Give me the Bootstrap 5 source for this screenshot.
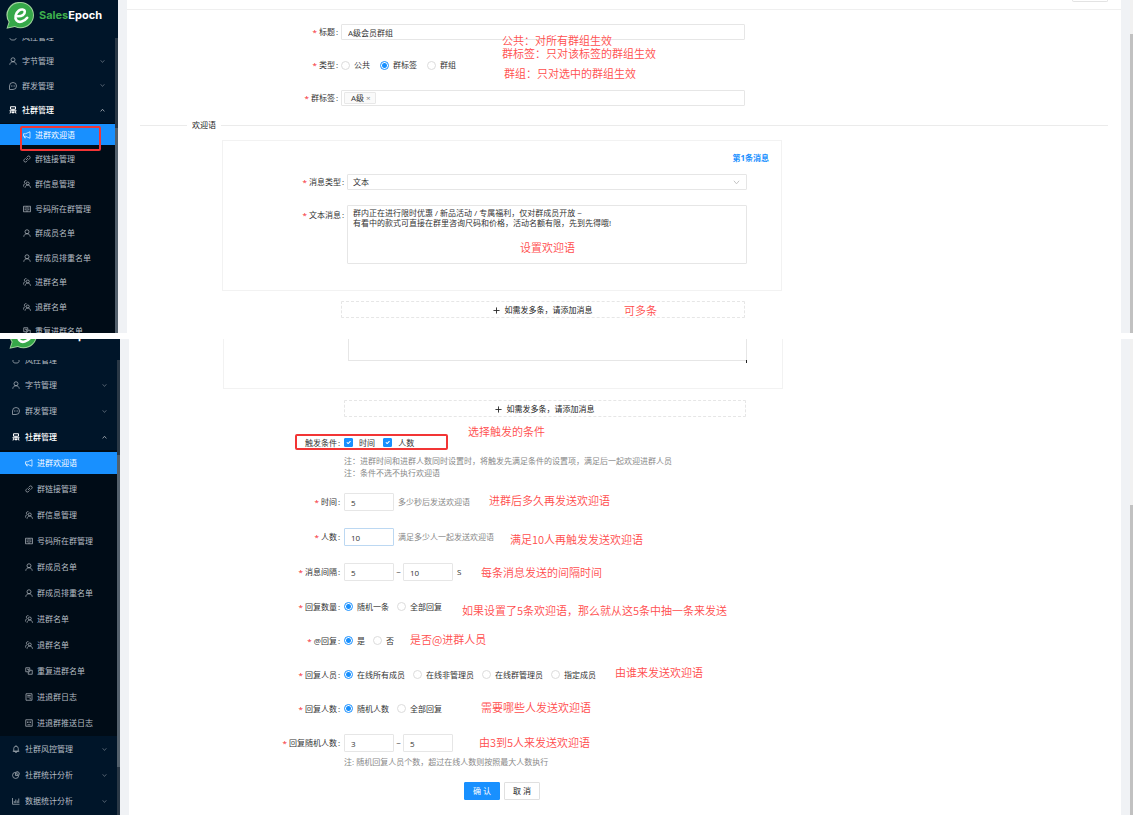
<!DOCTYPE html>
<html lang="zh-CN">
<head>
<meta charset="utf-8">
<meta name="viewport" content="width=device-width, initial-scale=1">
<title>SalesEpoch 进群欢迎语</title>
<link href="https://cdn.jsdelivr.net/npm/bootstrap@5.3.0/dist/css/bootstrap.min.css" rel="stylesheet">
<style>
  body { font-family: "Open Sans", "Noto Sans CJK SC", sans-serif; font-size: 8px; line-height: 16px; color: #333; background: #fff; }
  a { text-decoration: none; }
  .ico { width: 8px; height: 8px; fill: none; stroke: currentColor; stroke-width: 1.4; flex: none; }
  .second { margin-top: 6px; }

  /* sidebar */
  .side { width: 118px; background: #001529; flex: none; }
  .side-b { width: 120px; }
  .brand { height: 38px; padding: 0 0 9px 6px; gap: 5px; overflow: hidden; }
  .side-b .brand { height: 21px; padding: 0 0 11px 9px; }
  .brand svg { width: 28px; height: 27px; flex: none; }
  .brand-text { font: 700 11px/14px Inter, sans-serif; color: #fff; margin-bottom: 7px; }
  .brand-text span { color: #3daf4c; }
  .menu { min-height: 0; }
  .menu li { flex: 1 1 0; display: flex; align-items: center; overflow: hidden; color: #b6bdc4; min-height: 0; }
  .side-b .menu li { flex: 0 0 26px; }
  .menu a { color: inherit; display: flex; align-items: center; flex: 1; height: 21px; padding: 0 10px 0 9px; gap: 5px; white-space: nowrap; }
  .side-b .menu a { height: 22px; padding-left: 12px; }
  .menu a .arrow { margin-left: auto; width: 5px; height: 5px; opacity: .7; }
  .menu li.sub { background: #000c17; }
  .menu li.sub a { padding-left: 23px; gap: 4px; }
  .side-b .menu li.sub a { padding-left: 25px; }
  .menu li.open, .menu li.on { color: #fff; }
  .menu li.open { font-weight: 500; }
  .menu li.on a { background: #1890ff; }
  .menu li.cut-top { flex: 0 0 11px; align-items: flex-end; }
  .side-b .menu li.cut-top { flex: 0 0 12px; }
  .menu li.cut-end { flex: 0 0 14px; align-items: flex-start; }
  .menu li.cut-top a, .menu li.cut-end a { height: 24px; flex: 1 0 auto; }
  .bar { width: 3px; background: #2a3846; }
  .bar i { display: block; height: 100%; background: #53606c; }
  .bar-a { padding-top: 90px; }
  .bar-b { padding: 95px 0 48px; }

  /* page */
  .gut { width: 9px; background: #f0f2f5; flex: none; }
  .scr { width: 3px; background: #f1f1f1; flex: none; padding-top: 34px; }
  .scr-b { padding-top: 166px; }
  .scr i { display: block; height: 100%; background: #c1c1c1; }
  .page { min-width: 0; background: #fff; }
  .page-b { padding-bottom: 15px; }
  .topbar { height: 10px; border-bottom: 1px solid #efefef; padding-right: 13px; margin-bottom: 14px; }
  .stub { width: 36px; height: 2px; border: 1px solid #e3e3e3; border-top: 0; border-radius: 0 0 2px 2px; background: #fff; padding: 0; }

  /* form rows */
  .fr { display: grid; grid-template-columns: 214px minmax(0, 404fr) 376fr; min-height: 16px; margin-bottom: 17px; align-items: center; }
  .page-b .fr { grid-template-columns: 215px minmax(0, 402fr) 375fr; min-height: 17px; }
  .page-b .fr.tall { min-height: 18px; }
  .lab { text-align: right; padding-right: 3px; white-space: nowrap; color: #333; }
  .page-b .lab { padding-right: 4px; }
  .lab::after { content: ":"; margin-left: 1px; }
  .req::before { content: "*"; color: #f5222d; margin-right: 2px; }
  .box { display: block; width: 100%; height: 16px; border: 1px solid #e6e6e6; border-radius: 1px; padding: 0 6px; font-size: 8px; line-height: 14px; color: #333; background-color: #fff; min-width: 0; }
  .box.num { width: 50px; height: 18px; line-height: 16px; flex: none; }
  .box.focus-on { border-color: #bcd8f2; }
  textarea.box { height: 59px; padding: 2px 5px; line-height: 10px; resize: none; }
  select.box { appearance: none; padding: 0 5px; }
  .opts { display: flex; gap: 8px; white-space: nowrap; }
  .opts.wide { gap: 10px; }
  .opts label { display: flex; align-items: center; gap: 4px; }
  .page .form-check-input { width: 9px; height: 9px; margin: 0; float: none; border: 1px solid #dcdcdc; background-color: #fff; }
  .page .form-check-input[type=radio]:checked { border-color: #1890ff; background-image: radial-gradient(circle, #1890ff 0 2px, #fff 3px); background-size: 100% 100%; }
  .page .form-check-input[type=checkbox] { border-radius: 1px; }
  .page .form-check-input[type=checkbox]:checked { border-color: #1890ff; background-color: #1890ff; }
  .chip { height: 12px; padding: 0 4px 0 6px; margin-left: 2px; border: 1px solid #e8e8e8; background: #fafafa; border-radius: 1px; line-height: 10px; }
  .chip button { border: 0; background: none; padding: 0 0 0 2px; color: #888; line-height: 10px; }
  .tilde { width: 9px; text-align: center; }
  .sep { margin: 11px 13px 7px; gap: 5px; color: #222; }
  .sep i { height: 1px; background: #ebebeb; }
  .sep i:first-child { width: 47px; }
  .card-line { display: grid; grid-template-columns: 95px minmax(0, 560fr) 339fr; }
  .page-b .card-line { grid-template-columns: 94px minmax(0, 560fr) 338fr; }
  .panel { border: 1px solid #f2f2f2; padding: 9px 34px 26px 0; }
  .panel .fr { grid-template-columns: 124px minmax(0, 1fr); margin-bottom: 15px; }
  .panel .fr:last-child { margin-bottom: 0; align-items: start; }
  .panel .fr:last-child .lab { padding-top: 2px; }
  .panel .first { margin: 0 -22px 8px 0; text-align: right; font-weight: 700; }
  .panel .first a { color: #1890ff; }
  .page-b .panel { border-top: 0; padding: 0 35px 27px 124px; }
  .page-b .panel textarea.box { height: 22px; border-top: 0; border-radius: 0; }
  .grip::after { content: ""; position: absolute; right: 0; bottom: -2px; width: 1px; height: 3px; background: #222; }
  .add { height: 17px; border: 1px dashed #e6e6e6; border-radius: 1px; background: #fff; padding: 0; font-size: 8px; line-height: 15px; color: #222; width: 100%; }
  .add svg { width: 7px; height: 7px; margin-right: 2px; }
  .add-a { margin: 10px 0 0; padding-bottom: 15px; }
  .add-b { margin-top: 11px; }
  .chev { position: absolute; right: 7px; top: 5px; color: #bbb; width: 7px; height: 7px; }
  .tip { color: #888; }
  .notes { padding-left: 215px; line-height: 12px; color: #888; }
  .notes + .tall { margin-top: 14px; }
  .actions { padding: 14px 0 0 335px; }
  .act { width: 36px; height: 18px; border: 1px solid #e0e0e0; border-radius: 1px; padding: 0; font-size: 8px; line-height: 16px; background: #fff; color: #222; }
  .act.ok { background: #1890ff; border-color: #1890ff; color: #fff; }

  /* red mark-up laid over the form */
  .say { position: absolute; font-size: 11px; line-height: 13px; color: #ff4d4d; white-space: nowrap; font-weight: 350; font-family: "Noto Sans CJK SC", sans-serif; }
  .ring { position: absolute; border: 2px solid #f23535; border-radius: 2px; pointer-events: none; }
  .ring-a { left: 20px; top: 126px; width: 81px; height: 25px; }
  .ring-b { left: 166px; top: 95px; width: 153px; height: 16px; }
  .a1 { left: 375px; top: 34px; } .a2 { left: 375px; top: 47px; } .a3 { left: 377px; top: 67px; }
  .a4 { left: 393px; top: 241px; } .a5 { left: 497px; top: 304px; }
  .b1 { left: 339px; top: 86px; } .b2 { left: 360px; top: 155px; } .b3 { left: 381px; top: 194px; }
  .b4 { left: 352px; top: 227px; } .b5 { left: 333px; top: 265px; } .b6 { left: 281px; top: 294px; }
  .b7 { left: 486px; top: 327px; } .b8 { left: 352px; top: 362px; } .b9 { left: 350px; top: 397px; }
</style>
</head>
<body>
<svg class="d-none" xmlns="http://www.w3.org/2000/svg">
  <symbol id="user" viewBox="0 0 16 16"><circle cx="8" cy="5.5" r="4"/><path d="M1.5 15.5c.5-4 3-6 6.500-6s6 2 6.500 6"/></symbol>
  <symbol id="users" viewBox="0 0 16 16"><circle cx="9.500" cy="7" r="3"/><path d="M4 15.500c.5-3.500 2.500-5.500 5.500-5.500s5 2 5.500 5.500M7 1.500C4 .5 2 3 3 5.500L4.500 7C2 8 1 10 1 13"/></symbol>
  <symbol id="chat" viewBox="0 0 16 16"><path d="M1 15V8a7 7 0 1 1 7 7z"/><path d="M4 8h1.500M7.300 8h1.500M10.600 8h1.500" stroke-width="1.800"/></symbol>
  <symbol id="team" viewBox="0 0 16 16"><path d="M3 1.500h10v5H3zM8 6.500V15M1 9.500h14M4 9.500L2 15M12 9.500l2 5.500M5 13h6" stroke-width="2"/></symbol>
  <symbol id="horn" viewBox="0 0 16 16"><path d="M1 5.500h4L14 1.500v13L5 10.500H1zM3 10.500v3h3"/></symbol>
  <symbol id="link" viewBox="0 0 16 16"><path d="M7 5l2.500-2.500a3 3 0 0 1 4.200 4.200L11 9.500M9 11l-2.500 2.500a3 3 0 0 1-4.200-4.200L5 6.500M6 10l4-4"/></symbol>
  <symbol id="book" viewBox="0 0 16 16"><path d="M1 2.500h14v11H1zM8 2.500v11M3 6h3M3 9.500h3M10 6h3M10 9.500h3"/></symbol>
  <symbol id="copy" viewBox="0 0 16 16"><path d="M1.500 1.500h8v8h-8zM9.500 6.500h5v8h-8v-5M4 4.500h3v3"/></symbol>
  <symbol id="log" viewBox="0 0 16 16"><path d="M2 1.500h12v13H2zM4.500 5h7M4.500 8h7M9 11.500h3"/></symbol>
  <symbol id="push" viewBox="0 0 16 16"><path d="M1.500 1.500h13v13h-13zM5 5v3M8 5v3M11 5v3M5 11.500h6"/></symbol>
  <symbol id="bell" viewBox="0 0 16 16"><path d="M3.500 12.500V7a4.500 4.500 0 0 1 9 0v5.500zM1.500 12.500h13M8 .5v2M6.500 15h3"/></symbol>
  <symbol id="pie" viewBox="0 0 16 16"><path d="M7 2.500a6.200 6.200 0 1 0 6.500 6.500H7zM9.500 1v5.500H15A5.700 5.700 0 0 0 9.500 1z"/></symbol>
  <symbol id="bars" viewBox="0 0 16 16"><path d="M1 2v12.500h14M4.500 12V8M7.500 12V5M10.500 12V7M13.500 12V3"/></symbol>
  <symbol id="shield" viewBox="0 0 16 16"><path d="M2 2h12v9l-2.500 3h-7L2 11z"/></symbol>
  <symbol id="down" viewBox="0 0 16 16"><path d="M2 4l6 7 6-7" stroke-width="2"/></symbol>
  <symbol id="up" viewBox="0 0 16 16"><path d="M2 11l6-7 6 7" stroke-width="2.500"/></symbol>
  <symbol id="plus" viewBox="0 0 16 16"><path d="M8 1v14M1 8h14" stroke-width="2"/></symbol>
  <symbol id="logo" viewBox="0 0 28 27">
    <path d="M14.500 0A13.300 13.300 0 0 1 28 13.200 13.300 13.300 0 0 1 14.500 26.200c-2 0-4-.4-5.700-1.200L.5 26.800 2.600 20A13 13 0 0 1 14.500 0z" fill="#9fd39c" stroke="none"/>
    <path d="M14.600 1A12.300 12.300 0 0 1 27 13.200 12.300 12.300 0 0 1 14.600 25.200c-2 0-4-.5-5.700-1.300L1.800 25.600l1.900-5.800A12.200 12.200 0 0 1 14.600 1z" fill="#36a849" stroke="none"/>
    <path d="M11.500 14.200c4.500.3 7.500-1.700 7.300-4.500-.2-2.600-3.600-2.900-6-1.100-3.200 2.500-4.400 7.300-2.200 9.800 2.600 2.800 7.600 1.200 10.600-2.600" fill="none" stroke="#fff" stroke-width="2.600" stroke-linecap="round"/>
  </symbol>
</svg>

<section class="d-flex">
  <nav class="side d-flex flex-column position-relative" aria-label="主菜单">
    <div class="brand d-flex align-items-end"><svg><use href="#logo"/></svg><div class="brand-text"><span>Sales</span>Epoch</div></div>
    <div class="d-flex flex-fill menu">
      <ul class="list-unstyled d-flex flex-column flex-fill m-0">
        <li class="cut-top"><a href="#"><svg class="ico"><use href="#shield"/></svg>风控管理</a></li>
        <li><a href="#"><svg class="ico"><use href="#user"/></svg>字节管理<svg class="ico arrow"><use href="#down"/></svg></a></li>
        <li><a href="#"><svg class="ico"><use href="#chat"/></svg>群发管理<svg class="ico arrow"><use href="#down"/></svg></a></li>
        <li class="open"><a href="#"><svg class="ico"><use href="#team"/></svg>社群管理<svg class="ico arrow"><use href="#up"/></svg></a></li>
        <li class="sub on"><a href="#"><svg class="ico"><use href="#horn"/></svg>进群欢迎语</a></li>
        <li class="sub"><a href="#"><svg class="ico"><use href="#link"/></svg>群链接管理</a></li>
        <li class="sub"><a href="#"><svg class="ico"><use href="#users"/></svg>群信息管理</a></li>
        <li class="sub"><a href="#"><svg class="ico"><use href="#book"/></svg>号码所在群管理</a></li>
        <li class="sub"><a href="#"><svg class="ico"><use href="#user"/></svg>群成员名单</a></li>
        <li class="sub"><a href="#"><svg class="ico"><use href="#user"/></svg>群成员排重名单</a></li>
        <li class="sub"><a href="#"><svg class="ico"><use href="#users"/></svg>进群名单</a></li>
        <li class="sub"><a href="#"><svg class="ico"><use href="#users"/></svg>退群名单</a></li>
        <li class="sub cut-end"><a href="#"><svg class="ico"><use href="#copy"/></svg>重复进群名单</a></li>
      </ul>
      <div class="bar bar-a"><i></i></div>
    </div>
    <div class="ring ring-a"></div>
  </nav>
  <div class="gut"></div>
  <main class="page flex-fill position-relative">
    <div class="topbar d-flex justify-content-end align-items-start"><button class="stub" type="button" aria-label="返回"></button></div>
    <form>
      <div class="fr"><label class="lab req" for="title">标题</label><input class="box" id="title" value="A级会员群组"></div>
      <div class="fr"><span class="lab req">类型</span>
        <div class="opts wide">
          <label><input class="form-check-input" type="radio" name="kind">公共</label>
          <label><input class="form-check-input" type="radio" name="kind" checked>群标签</label>
          <label><input class="form-check-input" type="radio" name="kind">群组</label>
        </div>
      </div>
      <div class="fr mb-0"><label class="lab req" for="tags">群标签</label>
        <div class="box d-flex align-items-center px-0"><span class="chip d-flex align-items-center flex-shrink-0">A级<button type="button" aria-label="移除">×</button></span><input id="tags" class="border-0 p-0 flex-fill w-auto h-100"></div>
      </div>
      <div class="sep d-flex align-items-center"><i></i><span>欢迎语</span><i class="flex-fill"></i></div>
      <div class="card-line"><span></span>
        <div class="panel">
          <div class="first"><a href="#">第1条消息</a></div>
          <div class="fr"><label class="lab req" for="mtype">消息类型</label>
            <div class="position-relative"><select class="box" id="mtype"><option>文本</option></select><svg class="ico chev"><use href="#down"/></svg></div></div>
          <div class="fr"><label class="lab req" for="msg">文本消息</label>
            <textarea class="box" id="msg">群内正在进行限时优惠 / 新品活动 / 专属福利，仅对群成员开放 ~
有看中的款式可直接在群里咨询尺码和价格，活动名额有限，先到先得哦!</textarea></div>
        </div>
      </div>
      <div class="fr add-a"><span></span><button class="add" type="button"><svg class="ico"><use href="#plus"/></svg> 如需发多条，请添加消息</button></div>
    </form>
    <div class="say a1">公共：对所有群组生效</div>
    <div class="say a2">群标签：只对该标签的群组生效</div>
    <div class="say a3">群组：只对选中的群组生效</div>
    <div class="say a4">设置欢迎语</div>
    <div class="say a5">可多条</div>
  </main>
  <div class="gut"></div>
  <div class="scr"><i></i></div>
</section>

<section class="d-flex second">
  <nav class="side side-b d-flex flex-column" aria-label="主菜单二">
    <div class="brand d-flex align-items-end"><svg><use href="#logo"/></svg><div class="brand-text"><span>Sales</span>Epoch</div></div>
    <div class="d-flex flex-fill menu">
      <ul class="list-unstyled d-flex flex-column flex-fill m-0">
        <li class="cut-top"><a href="#"><svg class="ico"><use href="#shield"/></svg>风控管理</a></li>
        <li><a href="#"><svg class="ico"><use href="#user"/></svg>字节管理<svg class="ico arrow"><use href="#down"/></svg></a></li>
        <li><a href="#"><svg class="ico"><use href="#chat"/></svg>群发管理<svg class="ico arrow"><use href="#down"/></svg></a></li>
        <li class="open"><a href="#"><svg class="ico"><use href="#team"/></svg>社群管理<svg class="ico arrow"><use href="#up"/></svg></a></li>
        <li class="sub on"><a href="#"><svg class="ico"><use href="#horn"/></svg>进群欢迎语</a></li>
        <li class="sub"><a href="#"><svg class="ico"><use href="#link"/></svg>群链接管理</a></li>
        <li class="sub"><a href="#"><svg class="ico"><use href="#users"/></svg>群信息管理</a></li>
        <li class="sub"><a href="#"><svg class="ico"><use href="#book"/></svg>号码所在群管理</a></li>
        <li class="sub"><a href="#"><svg class="ico"><use href="#user"/></svg>群成员名单</a></li>
        <li class="sub"><a href="#"><svg class="ico"><use href="#user"/></svg>群成员排重名单</a></li>
        <li class="sub"><a href="#"><svg class="ico"><use href="#users"/></svg>进群名单</a></li>
        <li class="sub"><a href="#"><svg class="ico"><use href="#users"/></svg>退群名单</a></li>
        <li class="sub"><a href="#"><svg class="ico"><use href="#copy"/></svg>重复进群名单</a></li>
        <li class="sub"><a href="#"><svg class="ico"><use href="#log"/></svg>进退群日志</a></li>
        <li class="sub"><a href="#"><svg class="ico"><use href="#push"/></svg>进退群推送日志</a></li>
        <li><a href="#"><svg class="ico"><use href="#bell"/></svg>社群风控管理<svg class="ico arrow"><use href="#down"/></svg></a></li>
        <li><a href="#"><svg class="ico"><use href="#pie"/></svg>社群统计分析<svg class="ico arrow"><use href="#down"/></svg></a></li>
        <li><a href="#"><svg class="ico"><use href="#bars"/></svg>数据统计分析<svg class="ico arrow"><use href="#down"/></svg></a></li>
      </ul>
      <div class="bar bar-b"><i></i></div>
    </div>
  </nav>
  <div class="gut"></div>
  <main class="page page-b flex-fill position-relative">
    <form>
      <div class="card-line"><span></span><div class="panel"><div class="grip position-relative"><textarea class="box" aria-label="文本消息"></textarea></div></div></div>
      <div class="fr add-b"><span></span><button class="add" type="button"><svg class="ico"><use href="#plus"/></svg> 如需发多条，请添加消息</button></div>
      <div class="fr mb-1"><span class="lab">触发条件</span>
        <div class="opts">
          <label><input class="form-check-input" type="checkbox" checked>&nbsp;时间</label>
          <label><input class="form-check-input" type="checkbox" checked>&nbsp;人数</label>
        </div>
      </div>
      <div class="notes">注：进群时间和进群人数同时设置时，将触发先满足条件的设置项，满足后一起欢迎进群人员<br>注：条件不选不执行欢迎语</div>
      <div class="fr tall"><label class="lab req" for="sec">时间</label><div class="d-flex gap-1 align-items-center"><input class="box num" id="sec" value="5"><span class="tip text-nowrap">多少秒后发送欢迎语</span></div></div>
      <div class="fr tall"><label class="lab req" for="ppl">人数</label><div class="d-flex gap-1 align-items-center"><input class="box num focus-on" id="ppl" value="10"><span class="tip text-nowrap">满足多少人一起发送欢迎语</span></div></div>
      <div class="fr tall"><label class="lab req" for="gap1">消息间隔</label><div class="d-flex align-items-center"><input class="box num" id="gap1" value="5"><span class="tilde">~</span><input class="box num" aria-label="最大间隔" value="10"><span class="ps-1">S</span></div></div>
      <div class="fr"><span class="lab req">回复数量</span><div class="opts">
        <label><input class="form-check-input" type="radio" name="cnt" checked>随机一条</label>
        <label><input class="form-check-input" type="radio" name="cnt">全部回复</label></div></div>
      <div class="fr"><span class="lab req">@回复</span><div class="opts">
        <label><input class="form-check-input" type="radio" name="at" checked>是</label>
        <label><input class="form-check-input" type="radio" name="at">否</label></div></div>
      <div class="fr"><span class="lab req">回复人员</span><div class="opts">
        <label><input class="form-check-input" type="radio" name="who" checked>在线所有成员</label>
        <label><input class="form-check-input" type="radio" name="who">在线非管理员</label>
        <label><input class="form-check-input" type="radio" name="who">在线群管理员</label>
        <label><input class="form-check-input" type="radio" name="who">指定成员</label></div></div>
      <div class="fr"><span class="lab req">回复人数</span><div class="opts">
        <label><input class="form-check-input" type="radio" name="num" checked>随机人数</label>
        <label><input class="form-check-input" type="radio" name="num">全部回复</label></div></div>
      <div class="fr tall mb-1"><label class="lab req" for="rnd">回复随机人数</label><div class="d-flex align-items-center"><input class="box num" id="rnd" value="3"><span class="tilde">~</span><input class="box num" aria-label="最大人数" value="5"></div></div>
      <div class="notes">注: 随机回复人员个数，超过在线人数则按照最大人数执行</div>
      <div class="d-flex gap-1 actions"><button class="act ok" type="submit">确 认</button><button class="act" type="button">取 消</button></div>
    </form>
    <div class="ring ring-b"></div>
    <div class="say b1">选择触发的条件</div>
    <div class="say b2">进群后多久再发送欢迎语</div>
    <div class="say b3">满足10人再触发发送欢迎语</div>
    <div class="say b4">每条消息发送的间隔时间</div>
    <div class="say b5">如果设置了5条欢迎语，那么就从这5条中抽一条来发送</div>
    <div class="say b6">是否@进群人员</div>
    <div class="say b7">由谁来发送欢迎语</div>
    <div class="say b8">需要哪些人发送欢迎语</div>
    <div class="say b9">由3到5人来发送欢迎语</div>
  </main>
  <div class="gut"></div>
  <div class="scr scr-b"><i></i></div>
</section>
<script src="https://cdn.jsdelivr.net/npm/bootstrap@5.3.0/dist/js/bootstrap.bundle.min.js"></script>
</body>
</html>
